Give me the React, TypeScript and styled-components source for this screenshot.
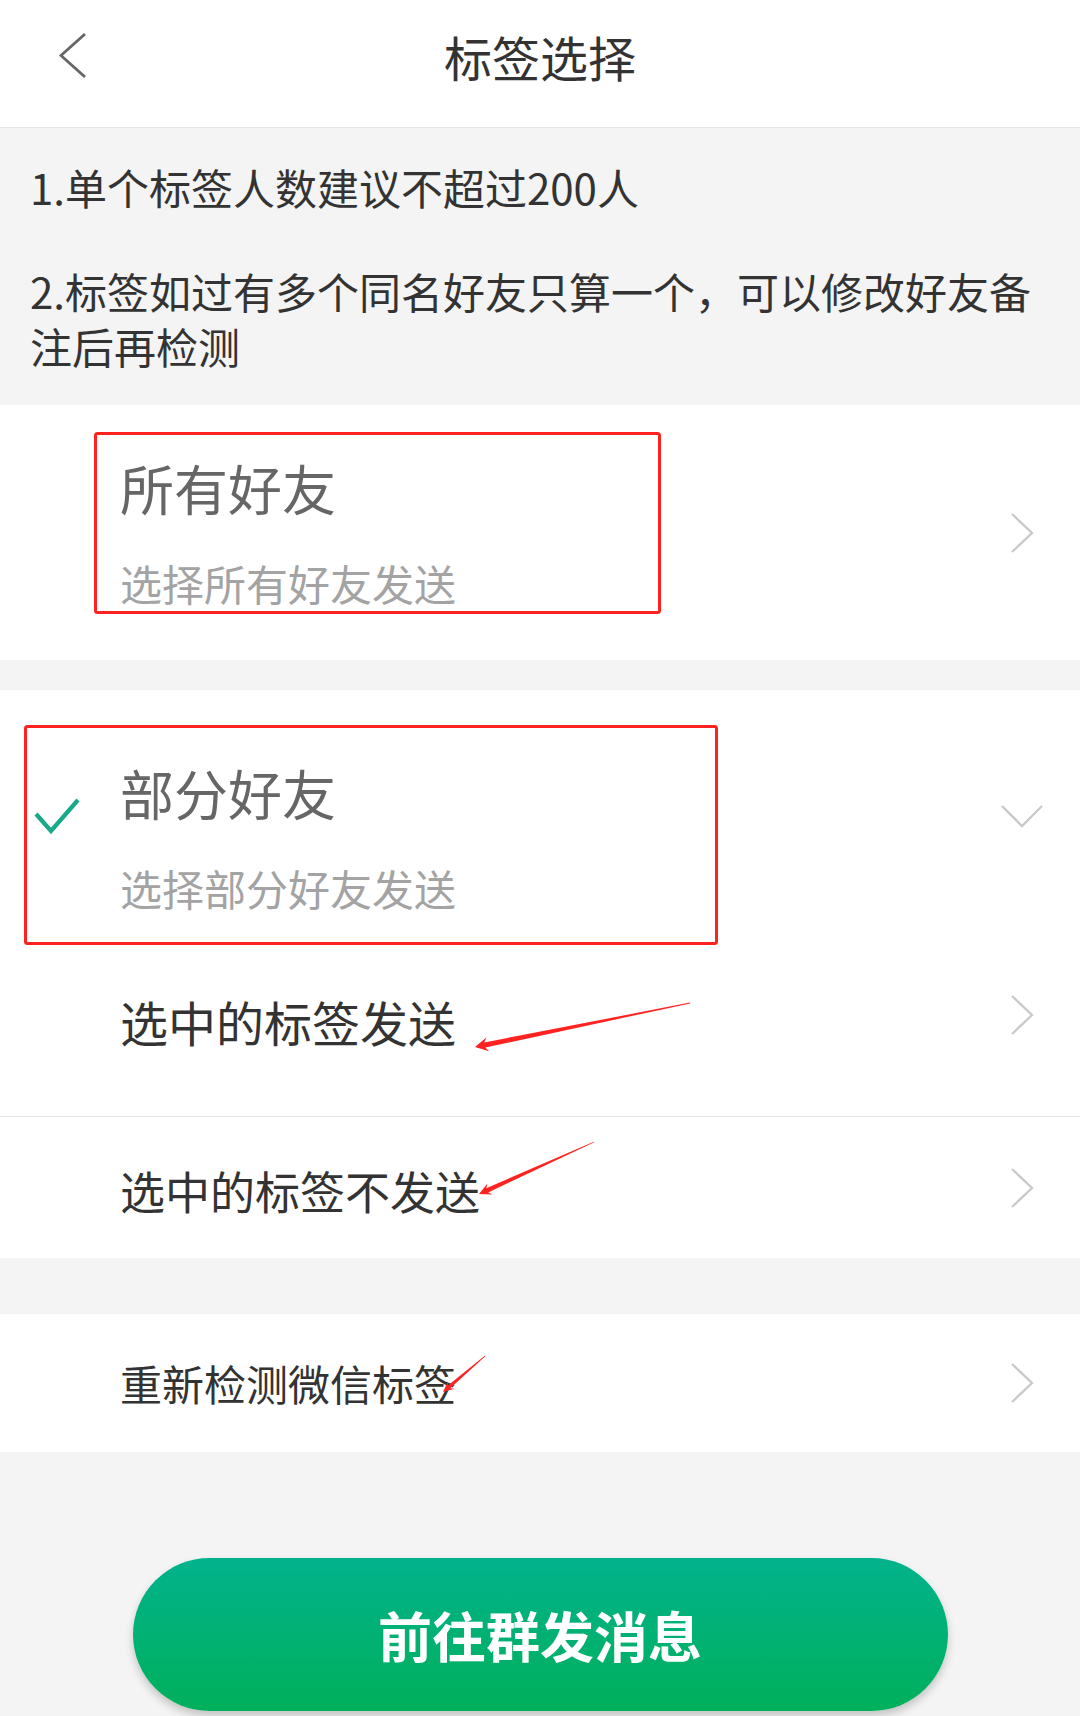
import React from 'react';
import styled, { createGlobalStyle } from 'styled-components';

const fontStack = `"Noto Sans CJK SC", "Noto Sans", sans-serif`;
const red = '#fe2320';

const GlobalStyle = createGlobalStyle`
  * { box-sizing: border-box; }
  body {
    margin: 0;
    background: #f4f4f4;
    font-family: ${fontStack};
  }
`

const Page = styled.div`
  position: relative;
  width: 1080px;
  min-height: 1716px;
  background: #f4f4f4;
`

const Header = styled.header`
  height: 128px;
  padding-bottom: 15px;
  display: grid;
  grid-template-columns: 1fr auto 1fr;
  align-items: center;
  background: #fff;
  border-bottom: 1px solid #e7e7e7;
`

const BackIcon = styled.svg`
  margin-left: 58px;
  display: block;
`

const Title = styled.h1`
  margin: 0;
  font-size: 48px;
  line-height: 1;
  font-weight: 400;
  color: #333;
`

const Notes = styled.div`
  padding: 31px 33px 32px 30px;

  p {
    margin: 0;
    font-size: 42px;
    line-height: 55px;
    color: #333;
  }

  p + p {
    margin-top: 49px;
  }
`

const Group = styled.section<{ $gap: number }>`
  background: #fff;
  margin-top: ${p => p.$gap}px;
`

const Row = styled.div<{ $height: number; $padBottom?: number }>`
  display: flex;
  align-items: center;
  height: ${p => p.$height}px;
  padding: 0 33px ${p => p.$padBottom || 0}px 0;
`

const Divider = styled.div`
  height: 1px;
  background: #e3e3e3;
`

const Lead = styled.div`
  width: 120px;
  flex: none;
  padding-left: 34px;

  svg { display: block; }
`

const Content = styled.div<{ $shift?: number }>`
  flex: 1;
  display: flex;
  flex-direction: column;
  margin-top: ${p => p.$shift || 0}px;
`

const OptionTitle = styled.span`
  font-size: 54px;
  line-height: 1;
  color: #666;
`

const OptionHint = styled.span`
  margin-top: 47px;
  font-size: 42px;
  line-height: 1;
  color: #a3a3a3;
`

const Label = styled.span<{ $size: number }>`
  font-size: ${p => p.$size}px;
  line-height: 1;
  color: #333;
`

const IconSlot = styled.div`
  width: 50px;
  flex: none;
  display: flex;
  justify-content: center;

  svg { display: block; }
`

const Footer = styled.div`
  display: flex;
  justify-content: center;
  padding-top: 106px;
`

const SendButton = styled.button`
  width: 815px;
  height: 153px;
  border: none;
  border-radius: 77px;
  background: linear-gradient(180deg, #02b28c 0%, #00b05b 100%);
  box-shadow: 0 5px 9px rgba(0, 0, 0, 0.2);
  color: #fff;
  font-family: ${fontStack};
  font-size: 54px;
  font-weight: 700;
  line-height: 1;
  padding: 0;
  cursor: pointer;
`

const Annotations = styled.svg`
  position: absolute;
  left: 0;
  top: 0;
  pointer-events: none;
`

function ChevronRight() {
  return (
    <svg width="24" height="42" viewBox="0 0 24 42">
      <polyline points="2,2 22,21 2,40" fill="none" stroke="#c9c9c9" strokeWidth="2.3" />
    </svg>
  )
}

function ChevronDown() {
  return (
    <svg width="44" height="24" viewBox="0 0 44 24">
      <polyline points="2,2 22,22 42,2" fill="none" stroke="#c9c9c9" strokeWidth="2.3" />
    </svg>
  )
}

function Check() {
  return (
    <svg width="46" height="36" viewBox="0 0 46 36">
      <polyline points="2,16 17,33 44,2" fill="none" stroke="#17a98a" strokeWidth="4.2" />
    </svg>
  )
}

type Pt = [number, number];

// tapered red arrow, thin at the tail and thick at the head
function arrowPoints(tail: Pt, tip: Pt, head: number, half: number, shaft: number) {
  const dx = tail[0] - tip[0];
  const dy = tail[1] - tip[1];
  const len = Math.hypot(dx, dy);
  const u: Pt = [dx / len, dy / len];
  const n: Pt = [-u[1], u[0]];
  const at = (base: Pt, along: number, side: number): string =>
    `${base[0] + u[0] * along + n[0] * side},${base[1] + u[1] * along + n[1] * side}`;
  return [
    at(tip, 0, 0),
    at(tip, head + 3, half),
    at(tip, head, shaft),
    at(tail, 0, 0.4),
    at(tail, 0, -0.4),
    at(tip, head, -shaft),
    at(tip, head + 3, -half),
  ].join(' ');
}

const arrows: { tail: Pt; tip: Pt; head: number; half: number; shaft: number }[] = [
  { tail: [690, 1003], tip: [475, 1047], head: 10, half: 7, shaft: 2.6 },
  { tail: [594, 1142], tip: [479, 1194], head: 9, half: 6, shaft: 2.3 },
  { tail: [485, 1356], tip: [443, 1392], head: 8, half: 5, shaft: 1.8 },
];

export default function App() {
  return (
    <Page>
      <GlobalStyle />
      <Header>
        <BackIcon width="32" height="50" viewBox="0 0 32 50">
          <polyline points="27,3 3,24.5 27,46" fill="none" stroke="#666" strokeWidth="2.8" />
        </BackIcon>
        <Title>标签选择</Title>
        <span />
      </Header>

      <Notes>
        <p>1.单个标签人数建议不超过200人</p>
        <p>2.标签如过有多个同名好友只算一个，可以修改好友备注后再检测</p>
      </Notes>

      <Group $gap={0}>
        <Row $height={255}>
          <Lead />
          <Content>
            <OptionTitle>所有好友</OptionTitle>
            <OptionHint>选择所有好友发送</OptionHint>
          </Content>
          <IconSlot><ChevronRight /></IconSlot>
        </Row>
      </Group>

      <Group $gap={30}>
        <Row $height={252}>
          <Lead><Check /></Lead>
          <Content $shift={43}>
            <OptionTitle>部分好友</OptionTitle>
            <OptionHint>选择部分好友发送</OptionHint>
          </Content>
          <IconSlot><ChevronDown /></IconSlot>
        </Row>
        <Row $height={174} $padBottom={28}>
          <Lead />
          <Content $shift={12}>
            <Label $size={48}>选中的标签发送</Label>
          </Content>
          <IconSlot><ChevronRight /></IconSlot>
        </Row>
        <Divider />
        <Row $height={141}>
          <Lead />
          <Content $shift={6}>
            <Label $size={45}>选中的标签不发送</Label>
          </Content>
          <IconSlot><ChevronRight /></IconSlot>
        </Row>
      </Group>

      <Group $gap={56}>
        <Row $height={138}>
          <Lead />
          <Content>
            <Label $size={42}>重新检测微信标签</Label>
          </Content>
          <IconSlot><ChevronRight /></IconSlot>
        </Row>
      </Group>

      <Footer>
        <SendButton>前往群发消息</SendButton>
      </Footer>

      <Annotations width="1080" height="1716" viewBox="0 0 1080 1716">
        <rect x="95.5" y="433.5" width="564" height="179" rx="2" fill="none" stroke={red} strokeWidth="3" />
        <rect x="25.5" y="726.5" width="691" height="217" rx="2" fill="none" stroke={red} strokeWidth="3" />
        {arrows.map((a, i) => (
          <polygon key={i} points={arrowPoints(a.tail, a.tip, a.head, a.half, a.shaft)} fill={red} />
        ))}
      </Annotations>
    </Page>
  )
}
